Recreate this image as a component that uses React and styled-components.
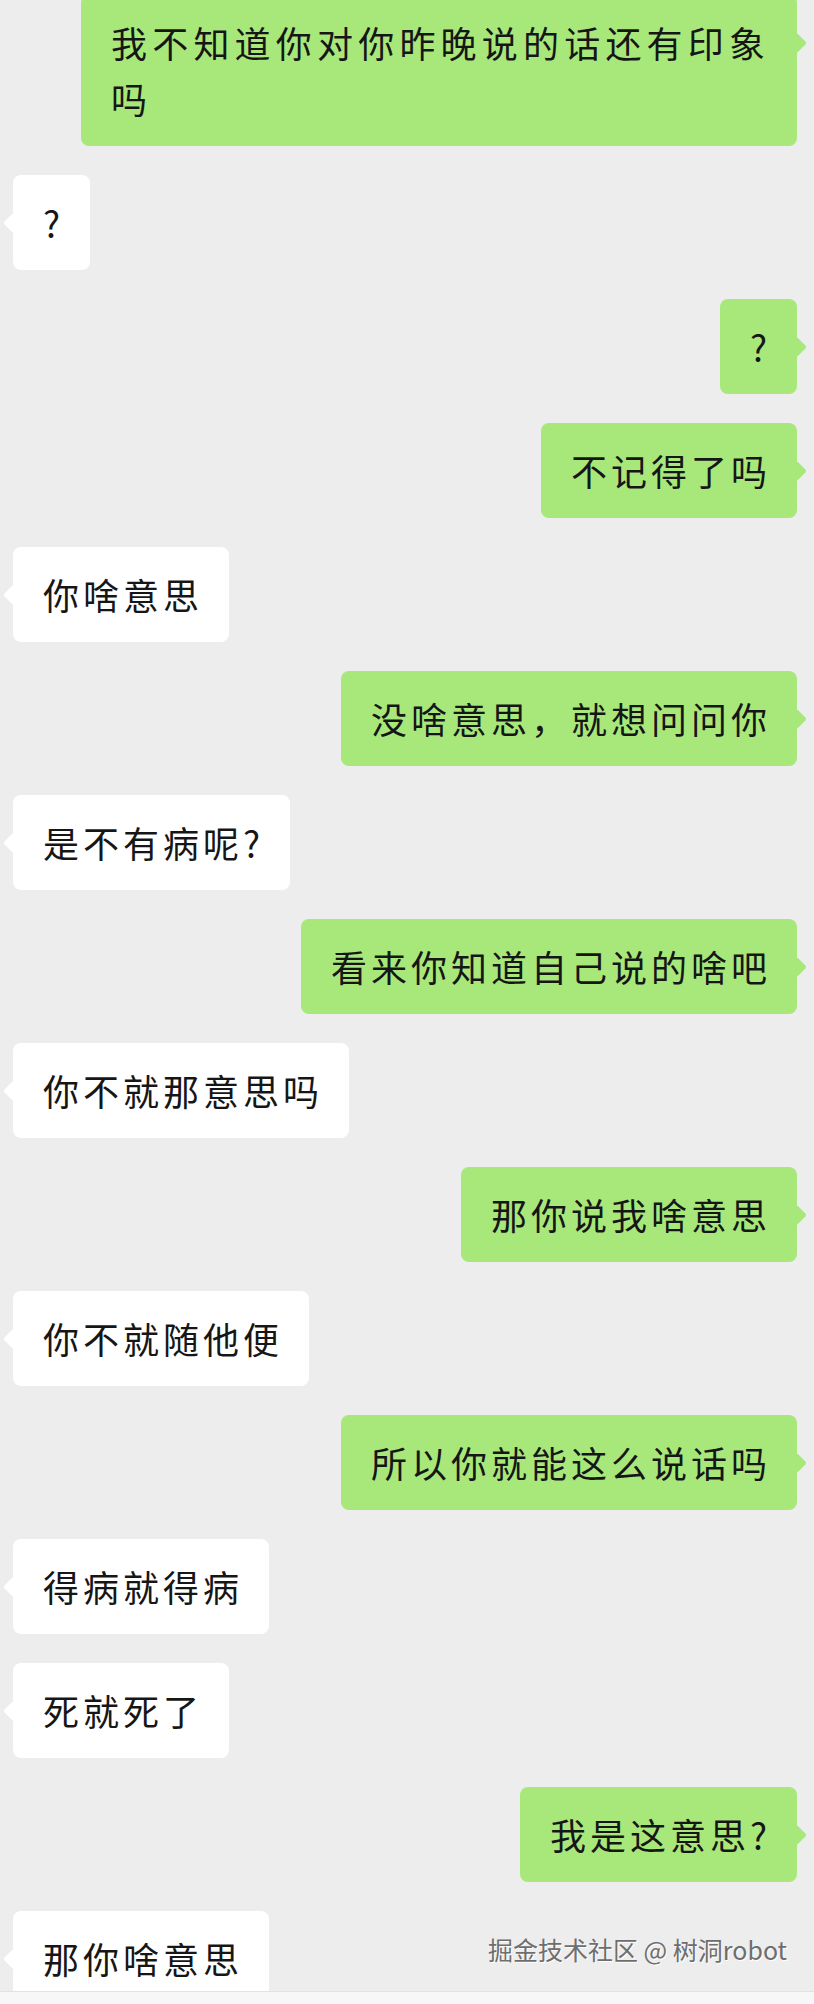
import React from 'react'
import styled, { createGlobalStyle } from 'styled-components'

const GlobalStyle = createGlobalStyle`
  html, body {
    margin: 0;
    padding: 0;
    background: #ededed;
  }
  body {
    font-family: "Noto Sans CJK SC", "Noto Sans", sans-serif;
  }
`

const messages = [
  { mine: true, text: '我不知道你对你昨晚说的话还有印象吗', spacing: 5.2 },
  { mine: false, text: '?' },
  { mine: true, text: '?' },
  { mine: true, text: '不记得了吗' },
  { mine: false, text: '你啥意思' },
  { mine: true, text: '没啥意思，就想问问你' },
  { mine: false, text: '是不有病呢?' },
  { mine: true, text: '看来你知道自己说的啥吧' },
  { mine: false, text: '你不就那意思吗' },
  { mine: true, text: '那你说我啥意思' },
  { mine: false, text: '你不就随他便' },
  { mine: true, text: '所以你就能这么说话吗' },
  { mine: false, text: '得病就得病' },
  { mine: false, text: '死就死了' },
  { mine: true, text: '我是这意思?' },
  { mine: false, text: '那你啥意思' },
]

const Page = styled.div`
  position: relative;
  width: 814px;
  height: 2004px;
  display: flex;
  flex-direction: column;
  overflow: hidden;
  background: #ededed;
`

// first bubble is cut off by the top of the screenshot
const Thread = styled.div`
  flex: 1;
  min-height: 0;
  overflow: hidden;
  display: flex;
  flex-direction: column;
  gap: 29px;
  margin-top: -5px;
  padding: 0 17px 0 13px;
`

const MessageRow = styled.div`
  display: flex;
  justify-content: ${p => (p.$mine ? 'flex-end' : 'flex-start')};
  flex-shrink: 0;
`

const Bubble = styled.div`
  position: relative;
  max-width: 716px;
  box-sizing: border-box;
  padding: 19px 26px 20px 30px;
  border-radius: 8px;
  background: ${p => (p.$mine ? '#a8e87b' : '#ffffff')};
  color: #161616;
  font-size: 36px;
  line-height: 56px;
  letter-spacing: ${p => (p.$spacing ? `${p.$spacing}px` : '4px')};
  white-space: pre-wrap;
  word-break: break-all;

  &::before {
    content: '';
    position: absolute;
    top: 41px;
    ${p => (p.$mine ? 'right: -7px;' : 'left: -7px;')}
    width: 14px;
    height: 14px;
    border-radius: 2px;
    background: inherit;
    transform: rotate(45deg);
  }
`

const Watermark = styled.div`
  position: absolute;
  right: 27px;
  bottom: 40px;
  font-size: 25px;
  line-height: 30px;
  color: #6e6e6e;
  text-shadow: 1px 1px 0 rgba(255, 255, 255, 0.95);
  white-space: nowrap;
`

const InputBar = styled.div`
  flex-shrink: 0;
  height: 13px;
  box-sizing: border-box;
  background: #f7f7f7;
  border-top: 1px solid #e2e2e2;
`

const App = () => (
  <>
    <GlobalStyle />
    <Page>
      <Thread>
        {messages.map((m, i) => (
          <MessageRow key={i} $mine={m.mine}>
            <Bubble $mine={m.mine} $spacing={m.spacing}>
              {m.text}
            </Bubble>
          </MessageRow>
        ))}
      </Thread>
      <Watermark>掘金技术社区 @ 树洞robot</Watermark>
      <InputBar />
    </Page>
  </>
)

export default App
